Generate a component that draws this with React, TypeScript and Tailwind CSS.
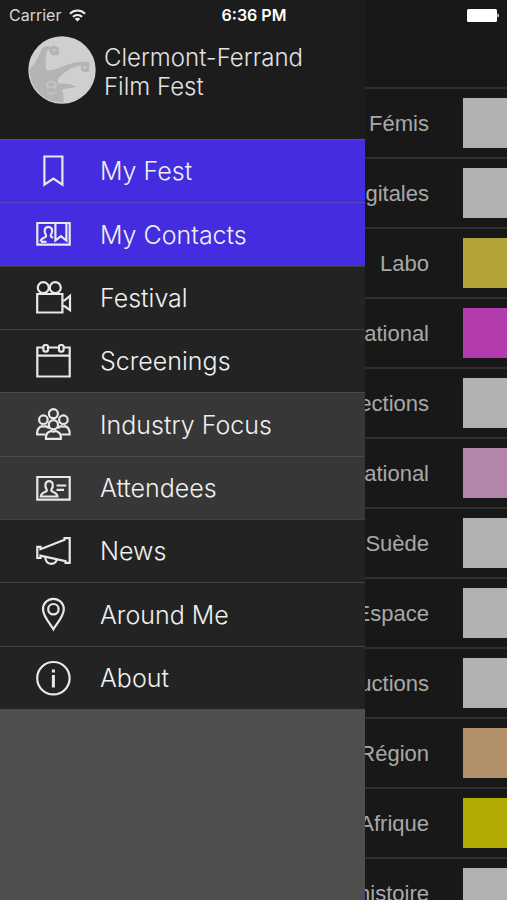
import type { ReactNode } from "react";

type MenuItem = {
  id: string;
  label: string;
  tone: string;
  icon: ReactNode;
};

type SectionRow = {
  label: string;
  swatch: string;
};

const PURPLE = "bg-[#442ce0] border-[#5548c4]";
const DARK = "bg-[#232323] border-[#404040]";
const GRAY = "bg-[#373737] border-[#494949]";

const menu: MenuItem[] = [
  {
    id: "my-fest",
    label: "My Fest",
    tone: PURPLE,
    icon: <path d="M8.4 3.500h18v28.200l-9-6.200-9 6.200z" />,
  },
  {
    id: "my-contacts",
    label: "My Contacts",
    tone: PURPLE,
    icon: (
      <>
        <path d="M1.3 7h32.4v21.6H1.3z" />
        <path d="M4.5 25.5c.5-2.6 2-3.4 4.4-4.3 1.2-.5 1.5-1.4.9-2.4-2.2-3.2-1.3-8 2.6-8s4.8 4.8 2.6 8c-.6 1-.3 1.9.9 2.4l1.2.6" />
        <path d="M19.4 7.5v17l5.5-4.3 5.5 4.3v-17" />
        <path d="M5 25.800h5.500" />
      </>
    ),
  },
  {
    id: "festival",
    label: "Festival",
    tone: DARK,
    icon: (
      <>
        <circle cx="7.3" cy="7.7" r="5.5" />
        <circle cx="19.3" cy="7.7" r="5.5" />
        <path d="M1.2 14h25.2v18.500H1.2z" />
        <path d="M26.400 20.500h2l5.600-4.600v14.300l-5.600-4h-2" />
      </>
    ),
  },
  {
    id: "screenings",
    label: "Screenings",
    tone: DARK,
    icon: (
      <>
        <path d="M7.2 4.500H1.300v29h32.400v-29h-5.900M12.200 4.500h10.600M1.300 12.700h32.400" />
        <rect x="7.4" y="2" width="4.6" height="6.600" rx="1.8" />
        <rect x="23" y="2" width="4.6" height="6.600" rx="1.8" />
      </>
    ),
  },
  {
    id: "industry",
    label: "Industry Focus",
    tone: GRAY,
    icon: (
      <>
        <circle cx="17.4" cy="7.7" r="4.500" />
        <circle cx="7.4" cy="13.700" r="4.300" />
        <circle cx="27.4" cy="13.700" r="4.300" />
        <circle cx="17.4" cy="18.700" r="4.600" />
        <path d="M9.500 28.500H1.200c-.4-5 1.400-7.400 4.800-8.400 1.200.8 2.200.8 3.400 0 1.600.4 2.800 1.100 3.600 2.200" />
        <path d="M25.300 28.500h8.300c.4-5-1.400-7.400-4.800-8.400-1.200.8-2.200.8-3.400 0-1.600.4-2.800 1.100-3.600 2.200" />
        <path d="M10 32.800c-.5-4.300 1.200-6.800 5-7.800 1.600.9 3.200.9 4.800 0 3.800 1 5.500 3.500 5 7.800z" />
      </>
    ),
  },
  {
    id: "attendees",
    label: "Attendees",
    tone: GRAY,
    icon: (
      <>
        <path d="M1.3 7h32.4v22.600H1.300z" />
        <path d="M4.8 26.500c.4-3 2.200-4 4.700-4.800 1.500-.5 1.700-1.500 1-2.500-2.200-3.200-1.300-8 2.600-8s4.800 4.800 2.600 8c-.7 1-.5 2 1 2.500 2.500.8 4.300 1.800 4.700 4.800z" />
        <path d="M20.500 15.500h9.800M20.500 19.800h7.500" />
      </>
    ),
  },
  {
    id: "news",
    label: "News",
    tone: DARK,
    icon: (
      <>
        <path d="M1.300 13.800h3.200v2.400L28.500 6.800V5.200h5.200v24.600h-4.200v-1.700L4.500 22.700v2.300H1.300z" />
        <path d="M9.200 24c.4 4.600 2.600 6.800 6 6.800 2.900 0 4.900-1.600 5.700-4.300" />
      </>
    ),
  },
  {
    id: "around",
    label: "Around Me",
    tone: DARK,
    icon: (
      <>
        <path d="M17.400 33.300C14.500 28 7 20.500 7 13.200a10.400 10.400 0 0 1 20.800 0c0 7.300-7.500 14.800-10.400 20.100z" />
        <circle cx="17.400" cy="13.200" r="5.200" />
      </>
    ),
  },
  {
    id: "about",
    label: "About",
    tone: DARK,
    icon: (
      <>
        <circle cx="17.400" cy="18.200" r="16.200" />
        <path d="M17.400 15v12.500" strokeWidth="3" />
        <path d="M17.400 9.500v3" strokeWidth="3" />
      </>
    ),
  },
];

const sections: SectionRow[] = [
  { label: "Fémis", swatch: "bg-[#b2b2b2]" },
  { label: "Digitales", swatch: "bg-[#b2b2b2]" },
  { label: "Labo", swatch: "bg-[#b2a535]" },
  { label: "National", swatch: "bg-[#b23cae]" },
  { label: "Sections", swatch: "bg-[#b2b2b2]" },
  { label: "National", swatch: "bg-[#b285a9]" },
  { label: "Suède", swatch: "bg-[#b2b2b2]" },
  { label: "Espace", swatch: "bg-[#b2b2b2]" },
  { label: "Productions", swatch: "bg-[#b2b2b2]" },
  { label: "Région", swatch: "bg-[#b2906a]" },
  { label: "Afrique", swatch: "bg-[#b2aa00]" },
  { label: "Préhistoire", swatch: "bg-[#b2b2b2]" },
];

function StatusBar() {
  return (
    <header className="absolute inset-x-0 top-0 z-20 grid h-[30px] grid-cols-3 items-center pl-[9px] pr-2 font-['Inter','Liberation_Sans',sans-serif] text-base text-white">
      <div className="flex items-center gap-2 text-[#d6d6d6]">
        <span>Carrier</span>
        <svg className="h-[13px] w-[17px]" viewBox="0 0 17 13" fill="none" stroke="#f0f0f0" strokeWidth="2">
          <path d="M1 4.700c4.200-4.200 10.800-4.200 15 0" />
          <path d="M3.900 7.800c2.600-2.500 6.600-2.500 9.200 0" />
          <path d="M8.500 12.600 5.700 9.800c1.600-1.500 4-1.500 5.600 0z" fill="#f0f0f0" stroke="none" />
        </svg>
      </div>
      <span className="text-center font-semibold">6:36 PM</span>
      <svg className="h-[13px] w-8 justify-self-end" viewBox="0 0 32 13" fill="#fff">
        <rect x="0" y="0" width="30" height="13" rx="1.500" />
        <path d="M30.500 4.500c1.800.5 1.800 3.500 0 4z" />
      </svg>
    </header>
  );
}

function FestLogo() {
  return (
    <svg className="size-[68px] shrink-0" viewBox="0 0 68 68">
      <defs>
        <clipPath id="disc">
          <circle cx="34" cy="34" r="32.5" />
        </clipPath>
      </defs>
      <circle cx="34" cy="34" r="33.7" fill="#cfcfcf" />
      <g clipPath="url(#disc)" fill="#b4b4b4">
        <path d="M0 34C6 31 10 21 14 13c2-3 5-3.500 9-2 1-2 4-2 5 0 3-1 4 2 2.500 4 1.500 2 0 4.500-2.500 4-2 1.500-5 0-5-2-1.500-.5-2-2-2-3.500-2 0-2.500 2-3 5-.7 6-.7 12 .5 15.500 6 1 14-2.500 20-5 5-2 10-3.500 15-3 3-.5 6-.5 8 .5l-.5 9c-3 1-6 .5-7.500-1-1-1.500-1-3.500 0-5-4 0-7 1.500-11 3.500-5 2.500-9 6-12 9-1 2-1 4 .5 5.500 5 0 13 .5 17.500 3-4 2-10 1.500-14.500 3 1.500 4 1.500 8 2 15H0z" />
        <path d="M19 48c2-3 7-3 9 0l-1 4c-2-1.500-5-1.500-7 0zM19 56c3 2.500 6 2 8 0" fill="none" stroke="#c6c6c6" strokeWidth="1.500" />
        <path d="M25 13.500c1 1 2 1 2.500 0M55 31.500h3.500" fill="none" stroke="#cfcfcf" strokeWidth="1.500" />
      </g>
    </svg>
  );
}

function Drawer() {
  return (
    <aside className="z-10 w-[72%] shrink-0 bg-[#4e4e4e]">
      <div className="flex gap-2 bg-[#1c1c1c] pb-[35px] pl-7 pt-9">
        <FestLogo />
        <h1 className="pt-[7px] text-2xl/[29px] font-light text-[#e2e2e2]">
          Clermont-Ferrand
          <br />
          Film Fest
        </h1>
      </div>

      <nav className="grid h-[570px] auto-rows-fr">
        {menu.map((m) => (
          <a
            key={m.id}
            href={`#${m.id}`}
            className={`flex items-center gap-7 border-t pl-9 text-[25px] font-light text-[#f0f0f0] ${m.tone}`}
          >
            <svg
              className="size-9 shrink-0"
              viewBox="0 0 36 36"
              fill="none"
              stroke="#e8e8e8"
              strokeWidth="2.200"
            >
              {m.icon}
            </svg>
            <span className="pt-0.5">{m.label}</span>
          </a>
        ))}
      </nav>
    </aside>
  );
}

function SectionList() {
  return (
    <main className="min-w-0 flex-1 overflow-hidden bg-[#181818] pt-[87px]">
      <ul>
        {sections.map((s, i) => (
          <li key={i} className="flex h-[70px] items-center gap-[34px] border-t-2 border-[#2f2f2f]">
            <span className="flex min-w-0 flex-1 justify-end whitespace-nowrap font-['Liberation_Sans',Arial,sans-serif] text-[22px] text-[#a8a8a8]">
              {s.label}
            </span>
            <span className={`h-[50px] w-11 shrink-0 ${s.swatch}`} />
          </li>
        ))}
      </ul>
    </main>
  );
}

export default function App() {
  return (
    <div className="relative flex h-screen overflow-hidden bg-[#181818] font-['Inter','Liberation_Sans',sans-serif]">
      <StatusBar />
      <Drawer />
      <SectionList />
    </div>
  );
}
